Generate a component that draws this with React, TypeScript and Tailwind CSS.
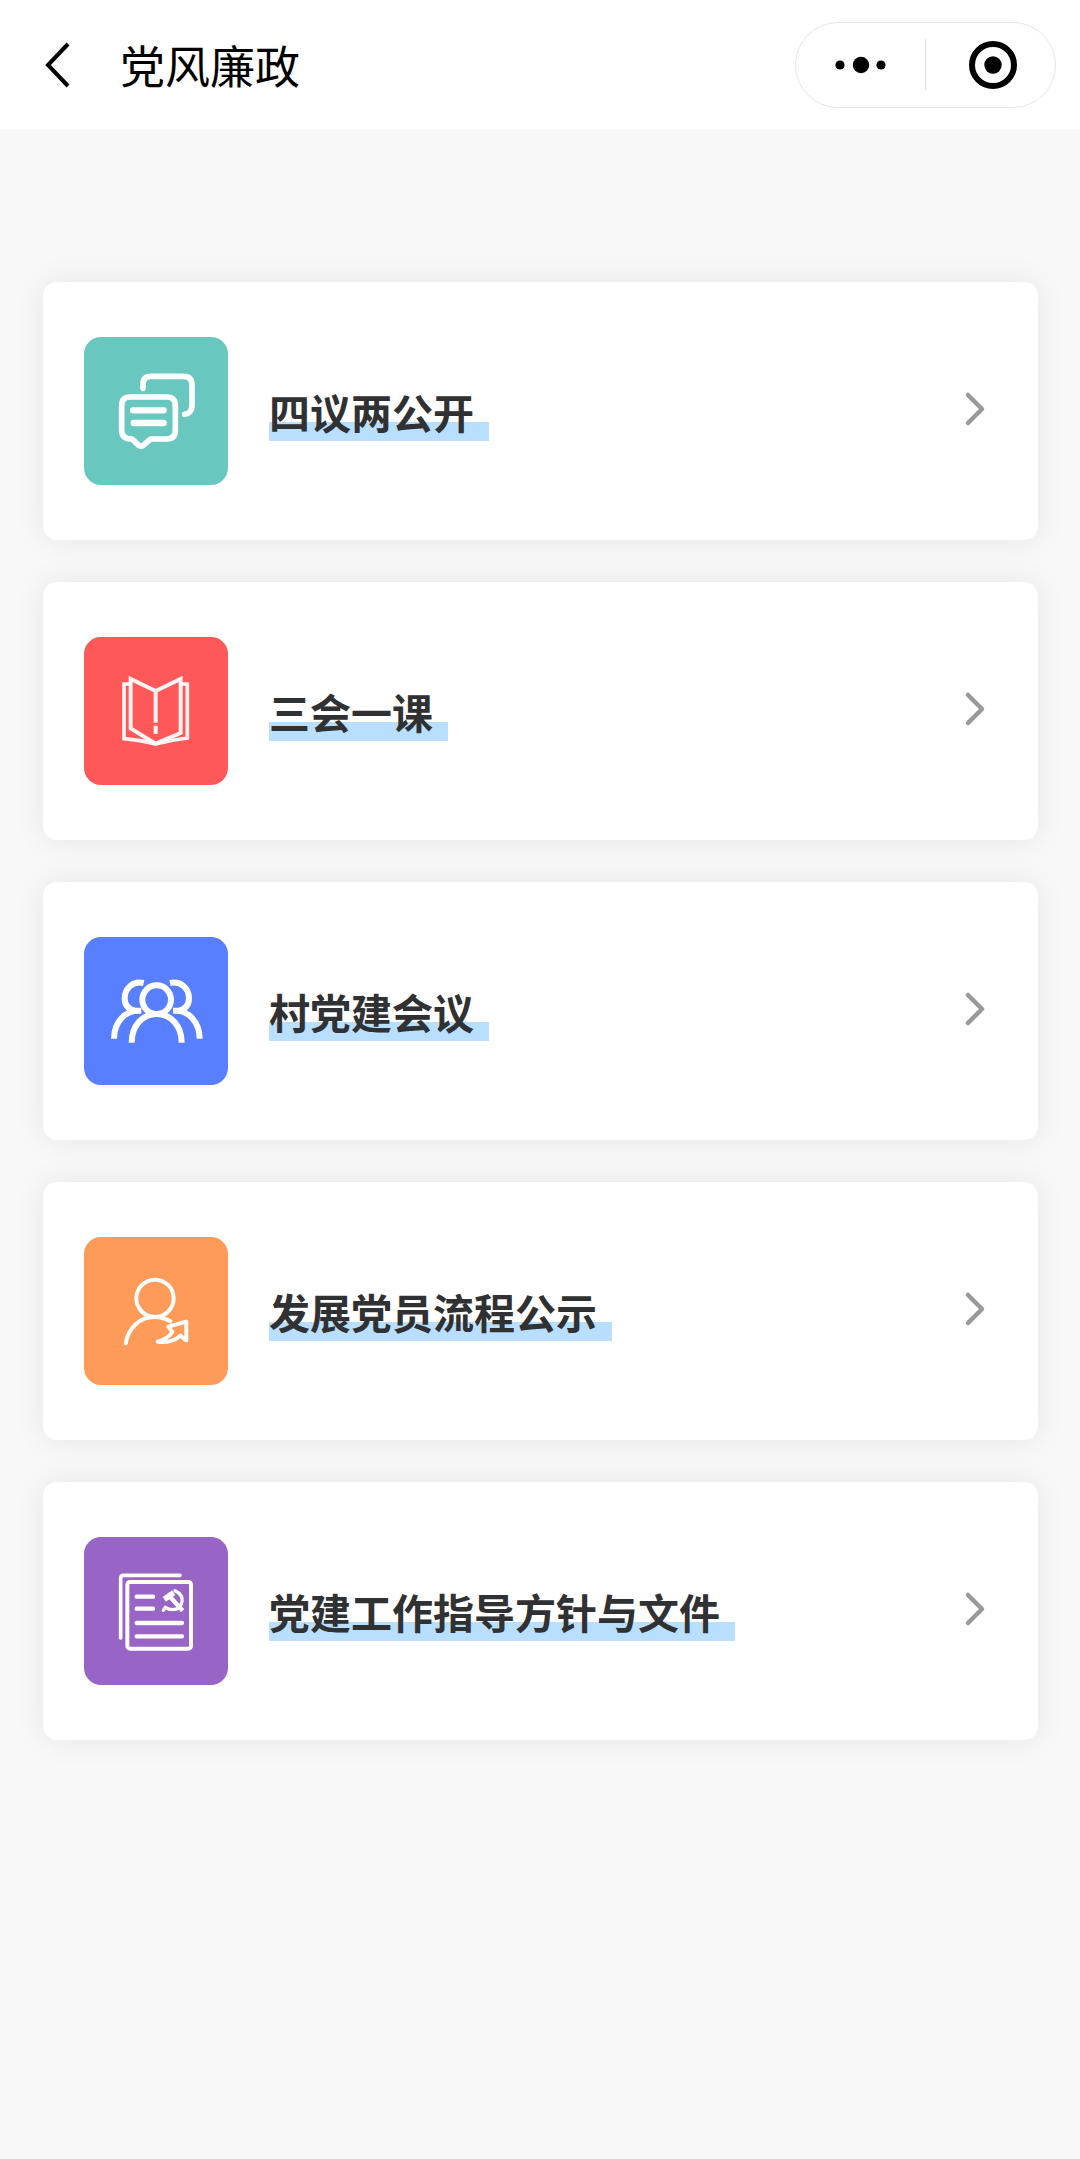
import React from "react";

interface MenuItem {
  title: string;
  href: string;
  color: string;
  viewBox: string;
  icon: React.ReactNode;
}

const menuItems: MenuItem[] = [
  {
    title: "四议两公开",
    href: "#open",
    color: "bg-[#68c7be]",
    viewBox: "30 30 432 444",
    icon: (
      <g strokeWidth="17">
        <path d="M207 184v-12q0-24 24-24h97q26 0 26 26v62q0 22-22 26" />
        <path d="M168 210h110q26 0 26 26v74q0 26-26 26h-48l-22 19q-7 5-14 0l-20-19q-31 0-31-28v-72q0-26 25-26z" />
        <path strokeWidth="19" d="M177 250h92M179 288h90" />
      </g>
    ),
  },
  {
    title: "三会一课",
    href: "#meeting",
    color: "bg-[#ff5858]",
    viewBox: "30 27 432 444",
    icon: (
      <g strokeWidth="12" strokeLinecap="butt" strokeLinejoin="miter" strokeOpacity="0.92">
        <path d="M245 284v-95l-75-36v148l75 46 75-32V153l-75 36" />
        <path d="M245 293v25" />
        <path d="M168 168h-18v164q48 4 95 16 47-12 95-18V168h-18" strokeWidth="11" />
      </g>
    ),
  },
  {
    title: "村党建会议",
    href: "#village",
    color: "bg-[#587fff]",
    viewBox: "30 27 432 444",
    icon: (
      <g strokeWidth="18" strokeLinecap="butt">
        <circle cx="248" cy="215" r="43" />
        <path d="M173 344c0-50 32-86 75-86s75 36 75 86" />
        <path d="M209 165c-32-8-57 16-57 46 0 22 13 33 30 37h20M196 248c-42-2-76 34-76 84" />
        <path d="M288 165c32-8 57 16 57 46 0 22-13 33-30 37h-18M303 248c40-2 74 34 74 84" />
      </g>
    ),
  },
  {
    title: "发展党员流程公示",
    href: "#member",
    color: "bg-[#ff9b58]",
    viewBox: "30 30 432 444",
    icon: (
      <g strokeWidth="12">
        <circle cx="243" cy="214" r="56" />
        <path d="M155 349c8-46 42-79 86-79q25 0 48 13" />
        <path d="M251 344q30-8 44-29l-12-16 54-15v56l-18-14q-24 24-68 18z" />
      </g>
    ),
  },
  {
    title: "党建工作指导方针与文件",
    href: "#docs",
    color: "bg-[#9864c6]",
    viewBox: "30 30 432 444",
    icon: (
      <g strokeWidth="12">
        <path strokeWidth="11" d="M140 333V154q0-9 9-9h169" />
        <rect x="160" y="165" width="191" height="200" rx="8" />
        <path strokeWidth="13" d="M188 209h49M188 245h49M188 288h136M188 328h136" />
        {/* 镰刀锤头 */}
        <path strokeWidth="10" d="M303 191q24 11 21 33-4 23-28 24-12 0-22-7l-6 9" />
        <path strokeWidth="13" strokeLinecap="butt" d="M284 205l42 46" />
        <path strokeWidth="17" strokeLinecap="butt" d="M271 217l28-20" />
      </g>
    ),
  },
];

function Header() {
  return (
    <header className="flex h-[129px] items-center justify-between bg-white pr-6 pl-[30px]">
      <div className="flex items-center">
        <button type="button" aria-label="返回" className="flex h-16 w-[90px] items-center">
          <svg viewBox="0 0 50 64" className="h-16 w-[50px]" fill="none" stroke="#000" strokeWidth="4">
            <path d="M38 11L18 32L38 53" />
          </svg>
        </button>
        <h1 className="text-[45px] leading-[64px] text-black">党风廉政</h1>
      </div>
      <div className="flex h-[86px] w-[261px] items-center rounded-full border border-[#e6e6e6]">
        <button type="button" aria-label="更多" className="flex h-full w-[129px] items-center justify-center">
          <svg viewBox="0 0 52 18" className="h-[18px] w-[52px]">
            <circle cx="5" cy="9" r="4.6" />
            <circle cx="26" cy="9" r="8.2" />
            <circle cx="46" cy="9" r="4.6" />
          </svg>
        </button>
        <span className="h-[51px] w-px bg-[#dcdcdc]" />
        <button type="button" aria-label="关闭" className="flex h-full flex-1 items-center justify-center pl-1">
          <svg viewBox="0 0 48 48" className="size-12">
            <circle cx="24" cy="24" r="21" fill="none" stroke="#000" strokeWidth="6" />
            <circle cx="24" cy="24" r="8.7" />
          </svg>
        </button>
      </div>
    </header>
  );
}

function MenuCard({ item }: { item: MenuItem }) {
  return (
    <a
      href={item.href}
      className="flex items-center rounded-[14px] bg-white py-[55px] pr-[39px] pl-[41px] shadow-[0_0_30px_rgba(0,0,0,0.08)]"
    >
      <div className={`h-[148px] w-36 shrink-0 overflow-hidden rounded-[17px] ${item.color}`}>
        <svg
          viewBox={item.viewBox}
          className="size-full"
          fill="none"
          stroke="#fff"
          strokeLinecap="round"
          strokeLinejoin="round"
        >
          {item.icon}
        </svg>
      </div>
      {/* 标题下方的蓝色底纹 */}
      <span className="ml-[41px] bg-[linear-gradient(transparent_41px,#b8dfff_41px)] pr-[15px] text-[41px] leading-[60px] font-bold text-[#303133]">
        {item.title}
      </span>
      <svg
        viewBox="0 0 48 48"
        className="ml-auto size-12"
        fill="none"
        stroke="#999"
        strokeWidth="4.5"
        strokeLinecap="round"
        strokeLinejoin="round"
      >
        <path d="M17 8L31 22L17 36" />
      </svg>
    </a>
  );
}

export default function App() {
  return (
    <div className="min-h-screen bg-[#f8f8f8] font-['Noto_Sans_CJK_SC',sans-serif]">
      <Header />
      <main className="pt-[153px] pr-[42px] pb-10 pl-[43px]">
        <ul className="flex flex-col gap-[42px]">
          {menuItems.map((item) => (
            <li key={item.title}>
              <MenuCard item={item} />
            </li>
          ))}
        </ul>
      </main>
    </div>
  );
}
